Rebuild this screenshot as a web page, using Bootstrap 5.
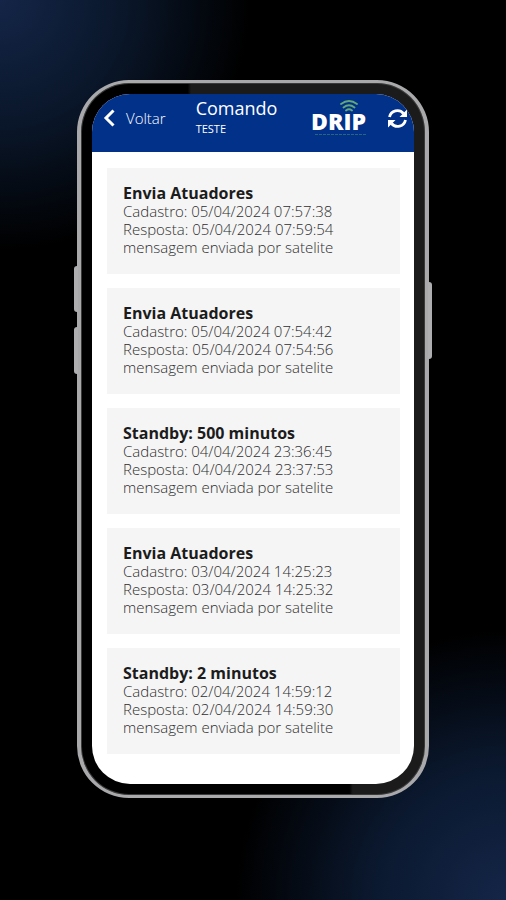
<!DOCTYPE html>
<html lang="pt-BR">
<head>
<meta charset="utf-8">
<meta name="viewport" content="width=device-width, initial-scale=1">
<title>Comando</title>
<link href="https://cdn.jsdelivr.net/npm/bootstrap@5.3.0/dist/css/bootstrap.min.css" rel="stylesheet">
<style>
body {
  font-family: "Open Sans", "Noto Sans", sans-serif;
  background:
    radial-gradient(circle at 0 0, #142547 0, #0a172b 120px, transparent 250px),
    radial-gradient(circle at 100% 100%, #142547 0, #0b1930 130px, transparent 270px),
    #000;
}
.stage { padding: 80px 77px 102px; }
.phone {
  border: 4px solid #a9a9ab;
  border-top-width: 3px;
  border-bottom-width: 3px;
  border-radius: 52px;
  padding: 11px;
  background:
    linear-gradient(90deg, #000 78%, #1b1b1b 79%) bottom / 100% 50% no-repeat,
    linear-gradient(90deg, #000 31%, #1b1b1b 32%) top / 100% 50% no-repeat;
  background-clip: padding-box;
  box-shadow: inset 0 0 0 1px #3a3a3a;
}
.side-key { position: absolute; width: 4px; background: #aeaeb0; }
.key-up { left: -7px; top: 183px; height: 46px; border-radius: 3px 0 0 3px; }
.key-down { left: -7px; top: 244px; height: 47px; border-radius: 3px 0 0 3px; }
.key-power { right: -7px; top: 199px; height: 77px; border-radius: 0 3px 3px 0; }
.screen { border-radius: 38px; background: #fff; }
.topbar { background: #023189; height: 58px; padding: 0 6px 0 11px; }
.back-btn { gap: 10px; font-size: 15px; line-height: 20px; margin-top: 14px; }
.heading { margin-left: 30px; }
.title-text { font-size: 18px; line-height: 24px; margin-top: 2px; }
.sub-text { font-size: 11px; line-height: 18px; }
.logo { margin-top: 5px; margin-right: 18px; }
.logo-name { font: 800 23px "Open Sans", "Noto Sans", sans-serif; }
.sync-btn { margin-top: 14px; }
.feed { padding: 16px 14px 30px 15px; gap: 14px; }
.entry { background: #f5f5f5; padding: 17px 17px 18px 16px; color: #2e2e2e; font-size: 15px; font-weight: 300; line-height: 18px; }
.entry-title { font-size: 16px; line-height: 17px; color: #1c1c1c; }
</style>
<script src="https://cdn.jsdelivr.net/npm/bootstrap@5.3.0/dist/js/bootstrap.bundle.min.js" defer></script>
</head>
<body class="min-vh-100">
<div class="stage">
  <div class="phone position-relative">
    <span class="side-key key-up"></span>
    <span class="side-key key-down"></span>
    <span class="side-key key-power"></span>
    <div class="screen overflow-hidden">
      <header class="topbar d-flex align-items-start text-white">
        <button type="button" class="back-btn btn fw-light p-0 border-0 text-white d-flex align-items-center">
          <svg width="13" height="18" viewBox="0 0 13 18" fill="none" stroke="#fff" stroke-width="3" aria-hidden="true"><path d="M10.500 1.500 3 9l7.500 7.500"/></svg>
          <span>Voltar</span>
        </button>
        <div class="heading">
          <h1 class="title-text fw-normal mb-0">Comando</h1>
          <div class="sub-text">TESTE</div>
        </div>
        <svg class="logo ms-auto" width="58" height="40" viewBox="0 0 58 40" role="img" aria-label="DRIP">
          <g fill="none" stroke="#62a878" stroke-width="1.800" stroke-linecap="round"><path d="M30 5Q38-1 46 5M32.500 8.500Q38 4 43.500 8.500M35 11.500Q38 9 41 11.500"/></g>
          <text class="logo-name" x="0" y="31" fill="#fff">DRIP</text>
          <path d="M4 35.500H55" stroke="#28677a" stroke-dasharray="3 1"/>
        </svg>
        <button type="button" class="sync-btn btn p-0 border-0 lh-1" aria-label="Atualizar">
          <svg width="21" height="21" viewBox="0 0 20 21" fill="none" stroke="#fff" stroke-width="2.800" aria-hidden="true"><path d="M2 9A8 8 0 0 1 16 5.500M18 12A8 8 0 0 1 4 15.500"/><path d="M19.500 1.500V9H12ZM.5 19.500V12H8Z" fill="#fff" stroke="none"/></svg>
        </button>
      </header>
      <main class="feed d-flex flex-column">
        <article class="entry"><h2 class="entry-title fw-bold mb-0">Envia Atuadores</h2><p class="mb-0">Cadastro: 05/04/2024 07:57:38<br>Resposta: 05/04/2024 07:59:54<br>mensagem enviada por satelite</p></article>
        <article class="entry"><h2 class="entry-title fw-bold mb-0">Envia Atuadores</h2><p class="mb-0">Cadastro: 05/04/2024 07:54:42<br>Resposta: 05/04/2024 07:54:56<br>mensagem enviada por satelite</p></article>
        <article class="entry"><h2 class="entry-title fw-bold mb-0">Standby: 500 minutos</h2><p class="mb-0">Cadastro: 04/04/2024 23:36:45<br>Resposta: 04/04/2024 23:37:53<br>mensagem enviada por satelite</p></article>
        <article class="entry"><h2 class="entry-title fw-bold mb-0">Envia Atuadores</h2><p class="mb-0">Cadastro: 03/04/2024 14:25:23<br>Resposta: 03/04/2024 14:25:32<br>mensagem enviada por satelite</p></article>
        <article class="entry"><h2 class="entry-title fw-bold mb-0">Standby: 2 minutos</h2><p class="mb-0">Cadastro: 02/04/2024 14:59:12<br>Resposta: 02/04/2024 14:59:30<br>mensagem enviada por satelite</p></article>
      </main>
    </div>
  </div>
</div>
</body>
</html>
